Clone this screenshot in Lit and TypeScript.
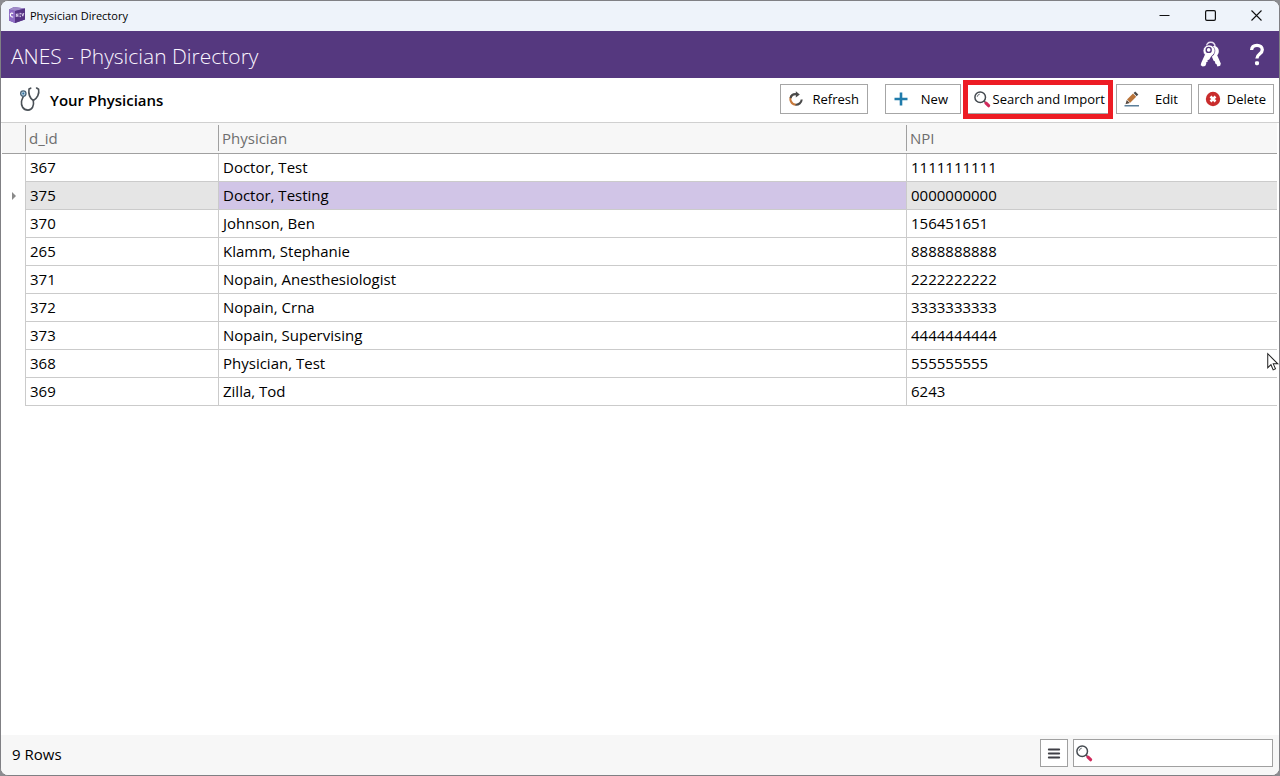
import { LitElement, html, css, svg } from "lit";
import { customElement, property, state } from "lit/decorators.js";
import { classMap } from "lit/directives/class-map.js";

interface Physician {
  id: number;
  name: string;
  npi: string;
}

const PHYSICIANS: Physician[] = [
  { id: 367, name: "Doctor, Test", npi: "1111111111" },
  { id: 375, name: "Doctor, Testing", npi: "0000000000" },
  { id: 370, name: "Johnson, Ben", npi: "156451651" },
  { id: 265, name: "Klamm, Stephanie", npi: "8888888888" },
  { id: 371, name: "Nopain, Anesthesiologist", npi: "2222222222" },
  { id: 372, name: "Nopain, Crna", npi: "3333333333" },
  { id: 373, name: "Nopain, Supervising", npi: "4444444444" },
  { id: 368, name: "Physician, Test", npi: "555555555" },
  { id: 369, name: "Zilla, Tod", npi: "6243" },
];

const ICONS = {
  app: { box: "0 0 16 16", body: svg`
    <path d="M0 2.5L5 0l11 1.4v11.2L6 16l-6-2.6z" fill="#6c4aa6"/>
    <path d="M0 2.5L5 0l11 1.4L6 4z" fill="#a08cc8"/>
    <path d="M0 2.5L6 4v12l-6-2.6z" fill="#8e6cc4"/>
    <path d="M6 4l10-2.6v11.2L6 16z" fill="#553383"/>
    <path d="M4.200 6.600c-1.600-1-2.800-.4-2.800 1.200s1.300 2.600 2.800 2" stroke="#fff" stroke-width="1.200" fill="none"/>
    <path d="M7.300 10V6.800l1.600 2.800V6.400M10.500 6.400h1.500M10.500 8h1.200M10.500 9.600h1.500M12.800 6.200l1 3 1-3.200" stroke="#e6dcf5" stroke-width=".9" fill="none"/>` },
  keys: { box: "0 0 22 27", body: svg`
    <path d="M6.500 6C6.500 2.800 8 1.200 10.700 1.200S15 2.800 15 6" stroke="#e9e0f2" stroke-width="1.500" fill="none"/>
    <path d="M12.500 5.200c3.800-.6 6.300 1.800 6.300 5 0 1.700-.6 3-1.600 4l3.600 8.200-.6 2.300-2.800.9-1-2.500-1.200-.6-.2-2-1.400-.8-3.200-7.400z" fill="#fff"/>
    <circle cx="9" cy="9.800" r="5.900" fill="#fff" stroke="#55387f" stroke-width=".6"/>
    <path d="M5 13.500L1.200 22l-.5 2.300 2 1.200 2.500-.4 1.100-2.300-.3-1.300 1.700-.8-.2-1.500 1.800-.8 2.700-4.600z" fill="#fff"/>
    <path d="M11.800 15.600l2.300-2.700" stroke="#55387f" stroke-width=".8"/>
    <circle cx="8.700" cy="8.900" r="2.500" fill="#fff" stroke="#55387f" stroke-width="1.400"/>` },
  help: { box: "0 0 16 24", body: svg`
    <path d="M2.600 7C2.800 3.900 4.900 2.300 8 2.300s5.300 1.700 5.300 4.500c0 4.300-5.400 4.200-5.400 8.600" stroke="#fff" stroke-width="3.300" fill="none"/>
    <rect x="6" y="18.200" width="4" height="4" rx="1.400" fill="#fff"/>` },
  stethoscope: { box: "0 0 22 26", body: svg`
    <path d="M11.700 2.200L10 3c-.7 5 1.200 9.500 4.300 11.500 3.800-2 6.300-6.500 5.300-11.300L17.600 2" stroke="#4a5157" stroke-width="1.600" fill="none" stroke-linecap="round" stroke-linejoin="round"/>
    <path d="M14.300 14.500c1 5-1 9.600-5.300 9.600-5.200 0-7-4.600-6.500-8.600.3-2.500 1.400-3.200 1.700-5" stroke="#4a5157" stroke-width="1.600" fill="none"/>
    <circle cx="4.300" cy="7.600" r="2.700" fill="#b9d3e4" stroke="#4a6478" stroke-width="1.300"/>
    <circle cx="4.300" cy="7.600" r="1" fill="#2b6f9f"/>` },
  refresh: { box: "0 0 14 14", body: svg`
    <path d="M2.700 3.700A5.500 5.500 0 0 0 7 12.700" stroke="#c87a3c" stroke-width="2.100" fill="none"/>
    <path d="M6.600 12.700A5.600 5.600 0 0 0 12.700 7.500" stroke="#4a4a4a" stroke-width="2.100" fill="none"/>
    <path d="M1.600 6.200C2 3.500 4.200 1.900 7.500 2.200" stroke="#4a4a4a" stroke-width="2.100" fill="none"/>
    <path d="M6.800-.8l4 3.200-4 3z" fill="#4a4a4a"/>` },
  plus: { box: "0 0 14 14", body: svg`
    <path d="M7 .5v13M.5 7h13" stroke="#1f7bab" stroke-width="2.600"/>` },
  search: { box: "0 0 16 16", body: svg`
    <path d="M10.200 10.200l1.600 1.600" stroke="#444a50" stroke-width="1.400"/>
    <path d="M12 12.200l2.600 2.500" stroke="#d02a5c" stroke-width="3.200" stroke-linecap="round"/>
    <circle cx="6.200" cy="6.200" r="5.300" fill="#fff" stroke="#444a50" stroke-width="1.500"/>
    <path d="M3.200 5.800a3.200 3.200 0 0 1 2.600-2.700" stroke="#6b7178" stroke-width="1" fill="none"/>` },
  edit: { box: "0 0 16 16", body: svg`
    <path d="M3 8.600l6-6 3.200 3.200-6 6z" fill="#b9743a"/>
    <path d="M9.600 2L11.200.5l3.100 3.100-1.600 1.600z" fill="#4a4a4a"/>
    <path d="M2.700 9l3.100 3-4.300 1.200z" fill="#5a4a40"/>
    <path d="M.5 14.700h14.500" stroke="#5b7f9a" stroke-width="1.600"/>` },
  remove: { box: "0 0 14 14", body: svg`
    <circle cx="7" cy="7" r="7.200" fill="#c92d2d"/>
    <path d="M4.500 4.500l5 5M9.500 4.500l-5 5" stroke="#fff" stroke-width="2.500"/>` },
  menu: { box: "0 0 12 11", body: svg`
    <path d="M.8 1.500h10.400M.8 5.500h10.400M.8 9.500h10.400" stroke="#3f3f46" stroke-width="1.900" stroke-linecap="round"/>` },
  minimize: { box: "0 0 11 11", body: svg`<path d="M.5 5.500h10" stroke="#111"/>` },
  maximize: { box: "0 0 11 11", body: svg`
    <rect x=".6" y=".6" width="9.800" height="9.800" rx="1.300" fill="none" stroke="#111" stroke-width="1.200"/>` },
  close: { box: "0 0 11 11", body: svg`<path d="M.5.500l10 10M10.500.500l-10 10" stroke="#111" stroke-width="1.100"/>` },
  marker: { box: "0 0 4 8", body: svg`<path d="M0 0l4 4-4 4z" fill="#8a8a8a"/>` },
  pointer: { box: "0 0 13 20", body: svg`
    <path d="M.8 1v15.200l3.500-3.300 2.400 5.600 2.500-1.100-2.400-5.400h4.900z" fill="#fff" stroke="#222" stroke-width="1.100"/>` },
};

@customElement("ui-icon")
class UiIcon extends LitElement {
  static styles = css`
    :host {
      display: inline-flex;
      flex: none;
    }
    .glyph {
      display: block;
      width: 100%;
      height: 100%;
      overflow: visible;
    }
  `;

  @property() name: keyof typeof ICONS = "app";

  render() {
    const icon = ICONS[this.name];
    return html`<svg class="glyph" viewBox=${icon.box} fill="none" aria-hidden="true">${icon.body}</svg>`;
  }
}

@customElement("app-root")
class AppRoot extends LitElement {
  static styles = css`
    :host {
      display: block;
      height: 100vh;
      background: #8c8c90;
      font-family: "Open Sans", "Noto Sans", sans-serif;
      font-size: 15px;
      color: #000;
    }
    * {
      box-sizing: border-box;
    }
    button {
      font: inherit;
      color: inherit;
      padding: 0;
      border: 0;
      background: none;
    }
    .window {
      position: relative;
      display: flex;
      flex-direction: column;
      height: 100%;
      border: 1px solid #808084;
      border-radius: 8px;
      overflow: hidden;
      background: #fff;
    }
    .titlebar {
      display: flex;
      align-items: center;
      height: 30px;
      padding: 0 0 2px 8px;
      background: #eef3fa;
      font-size: 11px;
    }
    .titlebar .name {
      flex: 1;
      padding-left: 5px;
    }
    .caption {
      display: flex;
      align-items: center;
      justify-content: center;
      width: 46px;
      height: 28px;
    }
    .i11 {
      width: 11px;
      height: 11px;
    }
    .i14 {
      width: 14px;
      height: 14px;
    }
    .i16 {
      width: 16px;
      height: 16px;
    }
    .banner {
      display: flex;
      align-items: center;
      height: 47px;
      padding: 0 14px 0 10px;
      gap: 27px;
      background: #55387f;
      color: #fbf6ff;
    }
    .banner h1 {
      flex: 1;
      margin: 0;
      padding-top: 2px;
      font-size: 21px;
      font-weight: 300;
      line-height: 28px;
    }
    .banner button {
      display: flex;
    }
    .keys {
      width: 22px;
      height: 27px;
    }
    .help {
      width: 16px;
      height: 24px;
    }
    .toolbar {
      display: flex;
      align-items: center;
      height: 45px;
      padding: 0 5px 2px 18px;
      border-bottom: 1px solid #d0d0d0;
      gap: 6px;
    }
    .toolbar h2 {
      flex: 1;
      margin: 0;
      padding: 2px 0 0 3px;
      font-size: 15px;
      font-weight: 600;
    }
    .stethoscope {
      width: 22px;
      height: 26px;
    }
    .action {
      position: relative;
      display: flex;
      align-items: center;
      justify-content: space-between;
      height: 30px;
      min-width: 76px;
      padding: 0 7px;
      border: 1px solid #a6a6a6;
      background: #fff;
      font-size: 13px;
    }
    .wide {
      min-width: 88px;
      margin-right: 11px;
      padding: 0 8px;
    }
    .short {
      padding: 0 12px 0 8px;
    }
    .edit {
      padding: 0 13px 0 7px;
    }
    .search {
      min-width: 143px;
      padding: 0 4px 0 6px;
    }
    .highlight::after {
      content: "";
      position: absolute;
      inset: -5px -4px -6px -5px;
      border: 5px solid #ed1c24;
    }
    .content {
      flex: 1;
      padding: 0 2px 0 1px;
    }
    .grid {
      width: 100%;
      table-layout: fixed;
      border-collapse: separate;
      border-spacing: 0;
    }
    .c-mark {
      width: 23px;
    }
    .c-id {
      width: 193px;
    }
    .c-npi {
      width: 371px;
    }
    th {
      height: 31px;
      padding: 0;
      background: #f7f7f7;
      border-bottom: 1px solid #a0a0a0;
      color: #6e6e6e;
      font-weight: 400;
      text-align: left;
    }
    .head {
      display: block;
      padding-left: 3px;
      border-left: 1px solid #a0a0a0;
      line-height: 26px;
    }
    td {
      height: 28px;
      padding: 0 4px 1px;
      border-bottom: 1px solid #cbcbcb;
      border-left: 1px solid #cbcbcb;
      line-height: 20px;
    }
    td.mark {
      padding: 0 0 0 10px;
      border: 0;
      font-size: 0;
      line-height: 0;
    }
    .marker {
      width: 4px;
      height: 8px;
    }
    .selected td {
      background: #e5e5e5;
    }
    .selected td.mark {
      background: #fff;
    }
    .selected td.focus {
      background: #d1c5e7;
    }
    .footer {
      display: flex;
      align-items: center;
      gap: 5px;
      height: 40px;
      padding: 0 6px 4px 11px;
      background: #f7f7f7;
    }
    .count {
      flex: 1;
      padding-top: 2px;
    }
    .menu {
      display: flex;
      align-items: center;
      justify-content: center;
      width: 28px;
      height: 28px;
      border: 1px solid #a0a0a0;
      background: #fff;
    }
    .bars {
      width: 12px;
      height: 11px;
    }
    .find {
      display: flex;
      align-items: center;
      gap: 4px;
      width: 200px;
      height: 28px;
      padding: 0 2px;
      border: 1px solid #a0a0a0;
      background: #fff;
    }
    .find input {
      flex: 1;
      min-width: 0;
      height: 24px;
      padding: 0;
      border: 0;
      outline: 0;
      background: none;
      font: inherit;
    }
    .pointer {
      position: absolute;
      right: 0;
      top: 351px;
      width: 12px;
      height: 20px;
      pointer-events: none;
    }
  `;

  @state() private selected = 375;

  render() {
    return html`
      <div class="window">
        <header class="titlebar">
          <ui-icon class="i16" name="app"></ui-icon>
          <span class="name">Physician Directory</span>
          <button class="caption" aria-label="Minimize"><ui-icon class="i11" name="minimize"></ui-icon></button>
          <button class="caption" aria-label="Maximize"><ui-icon class="i11" name="maximize"></ui-icon></button>
          <button class="caption" aria-label="Close"><ui-icon class="i11" name="close"></ui-icon></button>
        </header>
        <div class="banner">
          <h1>ANES - Physician Directory</h1>
          <button aria-label="Security"><ui-icon class="keys" name="keys"></ui-icon></button>
          <button aria-label="Help"><ui-icon class="help" name="help"></ui-icon></button>
        </div>
        <div class="toolbar">
          <ui-icon class="stethoscope" name="stethoscope"></ui-icon>
          <h2>Your Physicians</h2>
          <button class="action wide"><ui-icon class="i14" name="refresh"></ui-icon>Refresh</button>
          <button class="action short"><ui-icon class="i14" name="plus"></ui-icon>New</button>
          <button class="action search highlight"><ui-icon class="i16" name="search"></ui-icon>Search and Import</button>
          <button class="action edit"><ui-icon class="i16" name="edit"></ui-icon>Edit</button>
          <button class="action"><ui-icon class="i14" name="remove"></ui-icon>Delete</button>
        </div>
        <main class="content">
          <table class="grid">
            <colgroup>
              <col class="c-mark" />
              <col class="c-id" />
              <col />
              <col class="c-npi" />
            </colgroup>
            <thead>
              <tr>
                <th></th>
                <th scope="col"><span class="head">d_id</span></th>
                <th scope="col"><span class="head">Physician</span></th>
                <th scope="col"><span class="head">NPI</span></th>
              </tr>
            </thead>
            <tbody>
              ${PHYSICIANS.map((p) => this.row(p))}
            </tbody>
          </table>
        </main>
        <footer class="footer">
          <span class="count">${PHYSICIANS.length} Rows</span>
          <button class="menu" aria-label="Menu"><ui-icon class="bars" name="menu"></ui-icon></button>
          <label class="find">
            <ui-icon class="i16" name="search"></ui-icon>
            <input type="text" aria-label="Search rows" />
          </label>
        </footer>
        <ui-icon class="pointer" name="pointer"></ui-icon>
      </div>
    `;
  }

  private row(p: Physician) {
    const on = p.id === this.selected;
    return html`
      <tr class=${classMap({ selected: on })} @click=${() => (this.selected = p.id)}>
        <td class="mark">${on ? html`<ui-icon class="marker" name="marker"></ui-icon>` : ""}</td>
        <td>${p.id}</td>
        <td class=${classMap({ focus: on })}>${p.name}</td>
        <td>${p.npi}</td>
      </tr>
    `;
  }
}
